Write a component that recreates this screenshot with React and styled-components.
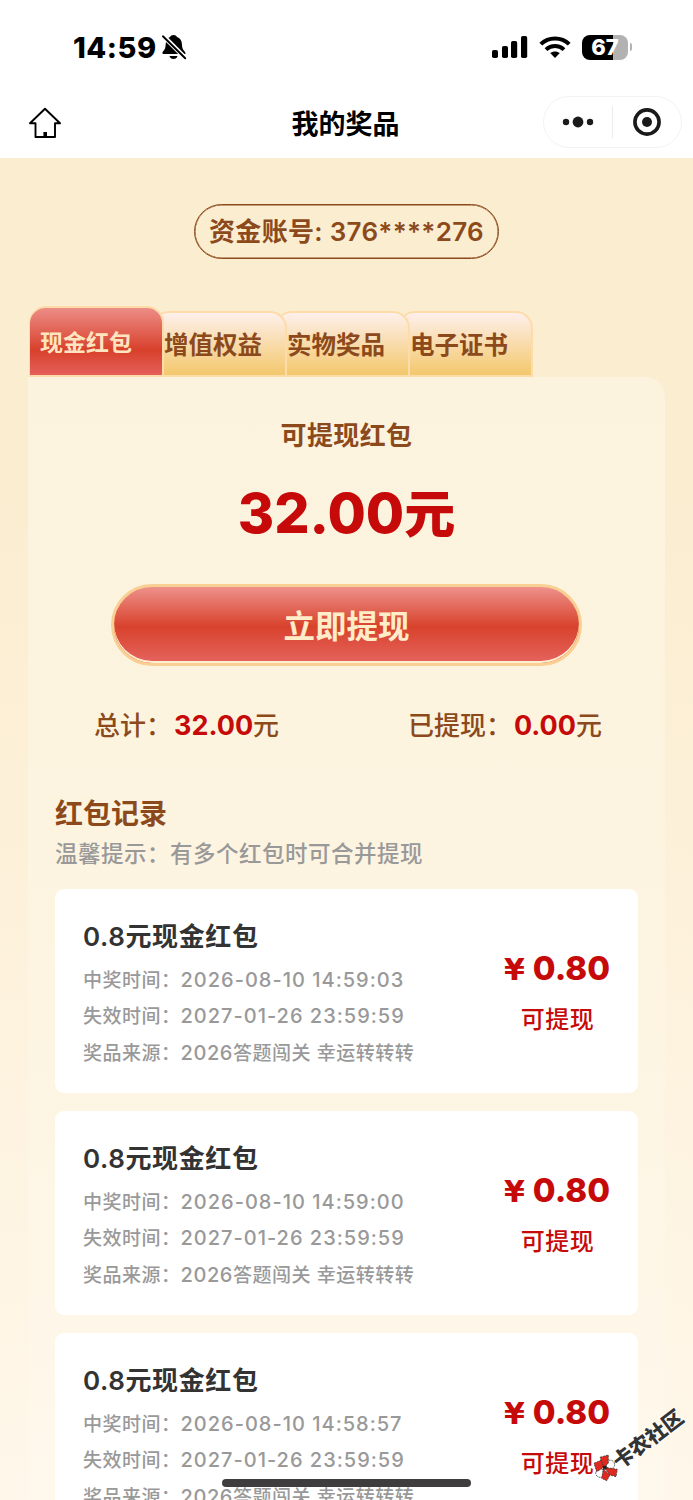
import styled, { createGlobalStyle } from 'styled-components'

const tabs = ['现金红包', '增值权益', '实物奖品', '电子证书']

const records = [
  { title: '0.8元现金红包', won: '2026-08-10 14:59:03', expires: '2027-01-26 23:59:59' },
  { title: '0.8元现金红包', won: '2026-08-10 14:59:00', expires: '2027-01-26 23:59:59' },
  { title: '0.8元现金红包', won: '2026-08-10 14:58:57', expires: '2027-01-26 23:59:59' }
]

const BellOff = () => (
  <svg width="26" height="28" viewBox="0 0 26 28">
    <path d="M12.500 2c1.700 0 3 .9 3.500 2.100 3 1 4.700 3.500 4.900 6.900.2 4.500 1.200 5.800 2.700 7.400.7.8 1.100 1.800.8 2.600H2.500c-1.300 0-1.400-1.400-.5-2.500 1.600-1.800 2.500-3 2.700-7.500.2-3.400 1.700-5.900 4.300-6.900.5-1.200 1.800-2.100 3.500-2.100z" />
    <path d="M8.500 23h8c-.4 1.900-2 3-4 3s-3.600-1.100-4-3z" />
    <path d="M1.200 1.900L25 25.700" stroke="#fff" strokeWidth="4.600" />
    <path d="M1.900 3.300l22.300 22" stroke="#000" strokeWidth="1.900" strokeLinecap="round" />
  </svg>
)

const Signal = () => (
  <svg width="36" height="24" viewBox="0 0 36 24">
    <rect x="0" y="15" width="6" height="8" rx="1.800" />
    <rect x="10" y="11" width="6" height="12" rx="1.800" />
    <rect x="19" y="6" width="6.200" height="17" rx="1.800" />
    <rect x="29" y="1" width="6.200" height="22" rx="1.800" />
  </svg>
)

const Wifi = () => (
  <svg width="32" height="24" viewBox="0 0 32 24" fill="none" stroke="#000" strokeWidth="4">
    <path d="M1.800 9.200C9.500 1.600 22.500 1.600 30.200 9.200" />
    <path d="M7 14.600c5.200-4.800 12.800-4.800 18 0" />
    <path d="M16 23l-4.800-4.900c2.800-2.300 6.800-2.300 9.600 0z" fill="#000" stroke="none" />
  </svg>
)

const Home = () => (
  <svg width="32" height="32" viewBox="0 0 32 32" fill="none" stroke="#000" strokeWidth="1.900" strokeLinejoin="round">
    <path d="M16 1.700L31 16.300H26V30H6.500V16.300H1z" />
    <path d="M14.400 25h3.600V30h-3.600z" fill="#000" stroke="none" />
  </svg>
)

const Target = () => (
  <svg width="28" height="28" viewBox="0 0 28 28">
    <circle cx="14" cy="14" r="12.100" fill="none" stroke="#1a1a1a" strokeWidth="3.600" />
    <circle cx="14" cy="14" r="5" fill="#1a1a1a" />
  </svg>
)

const Dots = () => (
  <svg width="32" height="12" viewBox="0 0 32 12" fill="#1a1a1a">
    <circle cx="4" cy="6" r="3.200" />
    <circle cx="16" cy="6" r="5.400" />
    <circle cx="28" cy="6" r="3.200" />
  </svg>
)

const StampLogo = () => (
  <svg width="28" height="28" viewBox="0 0 28 28" stroke="#333" strokeWidth=".8" strokeDasharray="2 1">
    <circle cx="18.300" cy="10.500" r="4.300" fill="#fff" />
    <circle cx="8" cy="19" r="4.300" fill="#fff" />
    <path d="M2 9.300L9.700 6l2.300 7.300-7.300 4.400z" fill="#e0281e" />
    <path d="M8 3.300L16.300 1v8.300l-4.300 4z" fill="#e0281e" />
    <path d="M12 13.300l13.300 2L24 22.700 18 21z" fill="#e0281e" />
    <path d="M11.300 15L18 21l-3.300 5.700-5-2.400z" fill="#e0281e" />
    <path d="M10.500 12l4-.5.500 3-3.500 1.500z" fill="#222" stroke="none" />
  </svg>
)

const Record = ({ title, won, expires }) => (
  <Card>
    <CardInfo>
      <CardTitle>{title}</CardTitle>
      <CardLine>中奖时间：<Digits>{won}</Digits></CardLine>
      <CardLine>失效时间：<Digits>{expires}</Digits></CardLine>
      <CardLine>奖品来源：<Digits $tight>2026</Digits>答题闯关 幸运转转转</CardLine>
    </CardInfo>
    <CardSide>
      <Price><Yen>¥</Yen>0.80</Price>
      <State>可提现</State>
    </CardSide>
  </Card>
)

const App = () => (
  <>
    <GlobalStyle />
    <Page>
      <StatusBar>
        <Clock>14:59</Clock>
        <BellOff />
        <StatusRight>
          <Signal />
          <Wifi />
          <BatteryWrap>
            <Battery>67</Battery>
            <BatteryCap />
          </BatteryWrap>
        </StatusRight>
      </StatusBar>
      <NavBar>
        <NavSide><Home /></NavSide>
        <NavTitle>我的奖品</NavTitle>
        <NavSide $end>
          <Capsule>
            <CapsuleHalf><Dots /></CapsuleHalf>
            <CapsuleLine />
            <CapsuleHalf><Target /></CapsuleHalf>
          </Capsule>
        </NavSide>
      </NavBar>
      <Body>
        <Account>资金账号: 376****276</Account>
        <Tabs>
          {tabs.map((tab, i) => (
            <Tab key={tab} $active={i === 0} $order={tabs.length - i}>{tab}</Tab>
          ))}
        </Tabs>
        <Panel>
          <PanelTitle>可提现红包</PanelTitle>
          <Amount>32.00<AmountUnit>元</AmountUnit></Amount>
          <Withdraw>立即提现</Withdraw>
          <Totals>
            <Total>总计：<TotalNumber>32.00</TotalNumber>元</Total>
            <Total>已提现：<TotalNumber>0.00</TotalNumber>元</Total>
          </Totals>
          <SectionTitle>红包记录</SectionTitle>
          <Hint>温馨提示：有多个红包时可合并提现</Hint>
          <Records>
            {records.map(record => <Record key={record.won} {...record} />)}
          </Records>
        </Panel>
      </Body>
      <Stamp>
        <StampLogo />
      </Stamp>
      <StampText>卡农社区</StampText>
      <HomeIndicator />
    </Page>
  </>
)

export default App

const GlobalStyle = createGlobalStyle`
  * {
    box-sizing: border-box;
  }
  body {
    margin: 0;
    overflow: hidden;
  }
  svg {
    display: block;
    flex-shrink: 0;
  }
`
const Page = styled.div`
  position: relative;
  width: 693px;
  height: 1500px;
  overflow: hidden;
  display: flex;
  flex-direction: column;
  background: #fff;
  font-family: Inter, 'Noto Sans CJK SC', sans-serif;
  font-weight: 500;
  white-space: nowrap;
`
const StatusBar = styled.div`
  height: 88px;
  flex-shrink: 0;
  display: flex;
  align-items: center;
  padding: 6px 61px 0 73px;
`
const Clock = styled.span`
  width: 88px;
  font-size: 29px;
  font-weight: 800;
  letter-spacing: 0.5px;
`
const StatusRight = styled.div`
  margin-left: auto;
  display: flex;
  align-items: center;
  gap: 11px;
`
const BatteryWrap = styled.div`
  display: flex;
  align-items: center;
  gap: 2px;
`
const Battery = styled.div`
  width: 46px;
  height: 25px;
  border-radius: 8px;
  display: flex;
  align-items: center;
  justify-content: center;
  background: linear-gradient(90deg, #000 67%, #b2b2b2 67%);
  color: #fff;
  font-size: 22px;
  font-weight: 800;
  line-height: 25px;
`
const BatteryCap = styled.div`
  width: 2px;
  height: 8px;
  border-radius: 0 2px 2px 0;
  background: #b2b2b2;
`
const NavBar = styled.div`
  height: 70px;
  flex-shrink: 0;
  display: flex;
  align-items: center;
  justify-content: space-between;
  padding: 0 11px 0 29px;
`
const NavSide = styled.div`
  flex: 1;
  display: flex;
  justify-content: ${props => props.$end ? 'flex-end' : 'flex-start'};
`
const NavTitle = styled.h1`
  margin: -2px 0 0 -20px;
  font-size: 27px;
  font-weight: 700;
  color: #000;
`
const Capsule = styled.div`
  width: 139px;
  height: 52px;
  margin-top: -2px;
  border: 1px solid #f3f3f3;
  border-radius: 26px;
  display: flex;
  align-items: center;
`
const CapsuleHalf = styled.div`
  flex: 1;
  display: flex;
  justify-content: center;
`
const CapsuleLine = styled.div`
  width: 1px;
  height: 32px;
  background: #ececec;
`
const Body = styled.div`
  flex: 1;
  min-height: 0;
  display: flex;
  flex-direction: column;
  padding: 46px 28px 0;
  background: linear-gradient(180deg, #fbedd0 0%, #fbedd0 25%, #fff7ea 100%);
`
const Account = styled.div`
  align-self: center;
  width: 305px;
  height: 55px;
  flex-shrink: 0;
  padding-bottom: 4px;
  border: 1.500px solid #8c4a1c;
  border-radius: 28px;
  box-shadow: inset 0 0 0 0.500px #8c4a1c;
  display: flex;
  align-items: center;
  justify-content: center;
  font-size: 26px;
  font-weight: 600;
  letter-spacing: 0.3px;
  color: #8c4a1c;
`
const Tabs = styled.div`
  height: 71px;
  flex-shrink: 0;
  margin: 47px 0 0 1px;
  display: flex;
  align-items: flex-end;
`
const Tab = styled.div`
  position: relative;
  z-index: ${props => props.$order};
  width: 135px;
  height: ${props => props.$active ? 71 : 66}px;
  padding: 0 0 1px ${props => props.$active ? 10 : 11}px;
  border: 2px solid #fddcaa;
  border-left-width: 1px;
  border-radius: 17px 17px 0 0;
  display: flex;
  align-items: center;
  font-size: ${props => props.$active ? 23 : 24.5}px;
  font-weight: 600;
  color: ${props => props.$active ? '#fee5c0' : '#8c4a1c'};
  background: ${props => props.$active
    ? 'linear-gradient(180deg, #ed8d87 0%, #d8402b 63%, #e4605a 100%)'
    : 'linear-gradient(180deg, #feefeb 0%, #f3c86c 100%)'};
  & + & {
    margin-left: -12px;
  }
`
const Panel = styled.div`
  height: 1200px;
  flex-shrink: 0;
  border-radius: 0 20px 0 0;
  padding: 40px 27px 0;
  display: flex;
  flex-direction: column;
  background: linear-gradient(180deg, #fcf3de 0%, #fdf4e1 50%, #fff9ee 100%);
`
const PanelTitle = styled.div`
  text-align: center;
  font-size: 26px;
  font-weight: 600;
  line-height: 38px;
  letter-spacing: 0.4px;
  color: #8c4a1c;
`
const Amount = styled.div`
  margin-top: 18px;
  display: flex;
  align-items: center;
  justify-content: center;
  font-size: 55.500px;
  font-weight: 800;
  line-height: 80px;
  color: #c60909;
`
const AmountUnit = styled.span`
  padding-top: 3px;
  font-size: 51px;
  line-height: 77px;
`
const Withdraw = styled.button`
  align-self: center;
  width: 471px;
  height: 82px;
  margin-top: 31px;
  padding: 0 0 3px;
  border: 3px solid #f9cf94;
  border-radius: 41px;
  box-shadow: inset 0 -2px 0 #fff0d2;
  font-family: inherit;
  font-size: 31.500px;
  font-weight: 600;
  color: #ffecc9;
  background: linear-gradient(180deg, #ee918b 0%, #d8422c 52%, #e4615a 96%);
`
const Totals = styled.div`
  margin: 40px 36px 0 39px;
  display: flex;
  justify-content: space-between;
`
const Total = styled.div`
  font-size: 26px;
  line-height: 40px;
  color: #8c4a1c;
`
const TotalNumber = styled.span`
  margin-left: 2px;
  font-size: 27px;
  font-weight: 700;
  color: #c60909;
`
const SectionTitle = styled.h2`
  margin: 49px 0 0;
  font-size: 28px;
  font-weight: 700;
  line-height: 39px;
  color: #8c4a1c;
`
const Hint = styled.div`
  font-size: 22.500px;
  line-height: 40px;
  letter-spacing: 0.5px;
  color: #999;
`
const Records = styled.div`
  margin-top: 15px;
  display: flex;
  flex-direction: column;
  gap: 18px;
`
const Card = styled.div`
  height: 204px;
  flex-shrink: 0;
  border-radius: 9px;
  padding: 28px 28px 0;
  display: flex;
  justify-content: space-between;
  background: #fff;
`
const CardInfo = styled.div`
  display: flex;
  flex-direction: column;
`
const CardTitle = styled.div`
  margin-bottom: 4.500px;
  font-size: 26px;
  font-weight: 600;
  line-height: 40px;
  letter-spacing: 0.6px;
  color: #333;
`
const CardLine = styled.div`
  height: 36.700px;
  font-size: 19px;
  line-height: 36.700px;
  letter-spacing: 0.5px;
  color: #999;
`
const Digits = styled.span`
  font-size: 20px;
  letter-spacing: ${props => props.$tight ? 0.6 : 1}px;
`
const CardSide = styled.div`
  padding-top: 29px;
  display: flex;
  flex-direction: column;
  align-items: center;
`
const Price = styled.div`
  display: flex;
  align-items: baseline;
  gap: 8px;
  font-size: 33px;
  font-weight: 800;
  line-height: 44px;
  color: #c60909;
`
const Yen = styled.span`
  font-family: 'DejaVu Sans', sans-serif;
  font-size: 30px;
  font-weight: 700;
`
const State = styled.div`
  margin-top: 10px;
  padding-left: 1px;
  font-size: 24px;
  line-height: 36px;
  letter-spacing: 0.4px;
  color: #c60909;
`
const Stamp = styled.div`
  position: absolute;
  z-index: 1;
  left: 592px;
  top: 1454px;
`
const StampText = styled.div`
  position: absolute;
  left: 606px;
  top: 1423px;
  font-family: 'Noto Sans CJK SC', sans-serif;
  font-size: 20.500px;
  font-weight: 900;
  line-height: 30px;
  color: #333;
  text-shadow: 1px 1px 0 #fff, -1px -1px 0 #fff;
  transform: rotate(-37deg);
`
const HomeIndicator = styled.div`
  position: absolute;
  left: 222px;
  bottom: 13px;
  width: 249px;
  height: 8px;
  border-radius: 4px;
  background: #3f3d3d;
`
